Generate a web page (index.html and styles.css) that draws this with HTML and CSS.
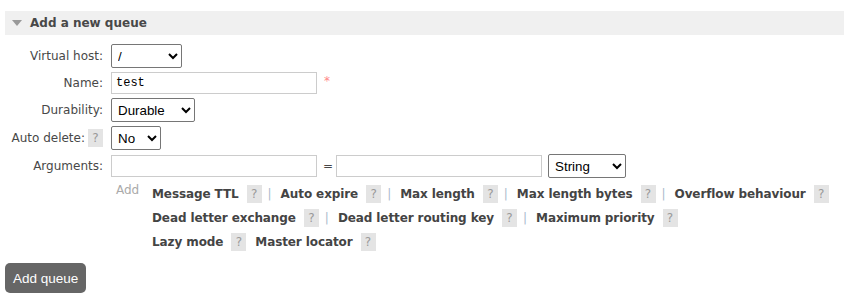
FILE: index.html
```html
<!DOCTYPE html>
<html lang="en">
<head>
    <meta charset="UTF-8">
    <meta name="viewport" content="width=device-width, initial-scale=1.0">
    <title>Add a new queue</title>
    <link rel="stylesheet" href="styles.css">
</head>
<body>
    <div class="section">
        <h2 class="section-title"><span class="arrow"></span>Add a new queue</h2>

        <div class="form">
            <label class="form-label">Virtual host:</label>
            <div class="form-field">
                <select class="sel sel-vhost">
                    <option>/</option>
                </select>
            </div>

            <label class="form-label">Name:</label>
            <div class="form-field">
                <input class="txt" type="text" value="test">
                <span class="mand">*</span>
            </div>

            <label class="form-label">Durability:</label>
            <div class="form-field">
                <select class="sel sel-durable">
                    <option>Durable</option>
                    <option>Transient</option>
                </select>
            </div>

            <label class="form-label">Auto delete: <span class="help">?</span></label>
            <div class="form-field">
                <select class="sel sel-auto">
                    <option>No</option>
                    <option>Yes</option>
                </select>
            </div>

            <label class="form-label">Arguments:</label>
            <div class="form-field">
                <input class="txt" type="text">
                <span class="eq">=</span>
                <input class="txt" type="text">
                <select class="sel sel-type">
                    <option>String</option>
                    <option>Number</option>
                    <option>Boolean</option>
                    <option>List</option>
                </select>
            </div>

            <div></div>
            <div class="args-help">
                <span class="add-label">Add</span>
                <div class="arg-lines">
                    <div class="arg-line">
                        <span class="arg-link">Message TTL</span><span class="help">?</span><span class="sep">|</span>
                        <span class="arg-link">Auto expire</span><span class="help">?</span><span class="sep">|</span>
                        <span class="arg-link">Max length</span><span class="help">?</span><span class="sep">|</span>
                        <span class="arg-link">Max length bytes</span><span class="help">?</span><span class="sep">|</span>
                        <span class="arg-link">Overflow behaviour</span><span class="help">?</span>
                    </div>
                    <div class="arg-line">
                        <span class="arg-link">Dead letter exchange</span><span class="help">?</span><span class="sep">|</span>
                        <span class="arg-link">Dead letter routing key</span><span class="help">?</span><span class="sep">|</span>
                        <span class="arg-link">Maximum priority</span><span class="help">?</span>
                    </div>
                    <div class="arg-line">
                        <span class="arg-link">Lazy mode</span><span class="help">?</span>
                        <span class="arg-link">Master locator</span><span class="help">?</span>
                    </div>
                </div>
            </div>
        </div>

        <button class="btn-add">Add queue</button>
    </div>
</body>
</html>
```

FILE: styles.css
```css
body {
    margin: 0;
    padding: 11px 0 0 5px;
    font-family: "DejaVu Sans", Verdana, sans-serif;
    font-size: 12px;
    color: #484848;
    background: #ffffff;
}

.section-title {
    display: flex;
    align-items: center;
    height: 24px;
    margin: 0;
    padding-left: 7px;
    background: #f0f0f0;
    font-size: 12px;
    font-weight: bold;
    color: #484848;
}

.arrow {
    width: 0;
    height: 0;
    margin-right: 8px;
    border-left: 5px solid transparent;
    border-right: 5px solid transparent;
    border-top: 6px solid #999;
}

.form {
    display: grid;
    grid-template-columns: 98px auto;
    column-gap: 8px;
    row-gap: 4px;
    align-items: center;
    margin-top: 9px;
}

.form-label {
    display: flex;
    justify-content: flex-end;
    align-items: center;
    gap: 3px;
    white-space: nowrap;
}

.form-field {
    display: flex;
    align-items: center;
}

.sel {
    height: 24px;
    padding: 0 2px;
    font-family: "Liberation Sans", Arial, sans-serif;
    font-size: 13.33px;
    color: #000;
    border: 1px solid #767676;
    border-radius: 2px;
    background: #fff;
}

.sel-vhost { width: 71px; }
.sel-durable { width: 84px; }
.sel-auto { width: 50px; }
.sel-type { width: 78px; margin-left: 6px; }

.txt {
    box-sizing: border-box;
    width: 206px;
    height: 22px;
    padding: 1px 4px;
    font-family: "Liberation Mono", "Courier New", monospace;
    font-size: 12px;
    color: #000;
    border: 1px solid #ccc;
    outline: none;
}

.mand {
    margin-left: 7px;
    color: #f88;
    font-size: 12px;
    align-self: flex-start;
    margin-top: 2px;
}

.eq {
    margin: 0 3px 0 6px;
    font-size: 12px;
}

.help {
    display: inline-block;
    width: 15px;
    height: 18px;
    line-height: 18px;
    text-align: center;
    background: #e4e4e4;
    color: #999;
    font-weight: normal;
    font-size: 12px;
}

.args-help {
    display: flex;
    align-items: flex-start;
    padding-left: 5px;
    margin-top: 2px;
}

.add-label {
    width: 36px;
    color: #aaa;
    line-height: 20px;
    margin-top: -4px;
}

.arg-lines {
    display: flex;
    flex-direction: column;
    gap: 4px;
}

.arg-line {
    display: flex;
    align-items: center;
    height: 20px;
    white-space: nowrap;
}

.arg-link {
    font-weight: bold;
    color: #444;
    margin-right: 8px;
    letter-spacing: -0.1px;
}

.help + .arg-link {
    margin-left: 9px;
}

.sep {
    color: #aabbcc;
    margin: 0 9px 0 6px;
}

.btn-add {
    margin-top: 11px;
    padding: 0 8px;
    height: 30px;
    font-family: "Liberation Sans", Arial, sans-serif;
    font-size: 13.5px;
    color: #fff;
    background: #666;
    border: none;
    border-radius: 5px;
    cursor: pointer;
}
```
